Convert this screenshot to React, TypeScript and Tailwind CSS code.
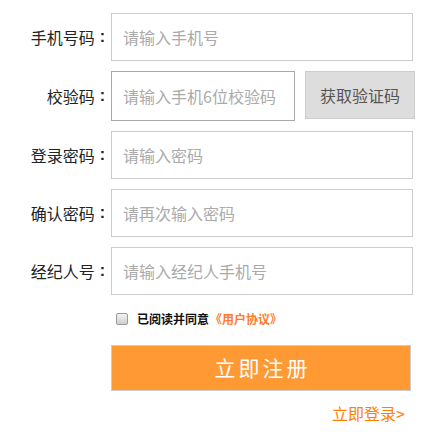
import React from "react";

const font = "font-['Microsoft_YaHei','Noto_Sans_CJK_SC',sans-serif]";

function Label({ text }: { text: string }) {
  return (
    <label className="w-[111px] flex justify-end items-center text-[16px] leading-[20px] text-[#222]">
      <span>{text}</span>
      <span className="ml-[5px] mr-[6px] font-['Liberation_Sans',sans-serif] font-bold">:</span>
    </label>
  );
}

function Row({ label, placeholder, last }: { label: string; placeholder: string; last?: boolean }) {
  return (
    <div className={`flex items-center h-[48px] ${last ? "" : "mb-[10px]"}`}>
      <Label text={label} />
      <input
        className="w-[302px] h-[48px] border border-[#ccc] px-[11px] text-[16px] text-[#333] placeholder:text-[#aaa] outline-none"
        placeholder={placeholder}
      />
    </div>
  );
}

export default function App() {
  return (
    <div className={`w-[447px] h-[434px] bg-white pt-[13px] ${font}`}>
      <Row label="手机号码" placeholder="请输入手机号" />
      <div className="flex items-center h-[50px] mb-[10px]">
        <Label text="校验码" />
        <input
          className="w-[184px] h-[50px] border border-[#a9a9a9] px-[11px] text-[16px] text-[#333] placeholder:text-[#aaa] outline-none"
          placeholder="请输入手机6位校验码"
        />
        <button className="ml-[10px] w-[110px] h-[48px] self-start bg-[#ddd] border border-[#ccc] text-[#555] text-[16px]">
          获取验证码
        </button>
      </div>
      <Row label="登录密码" placeholder="请输入密码" />
      <Row label="确认密码" placeholder="请再次输入密码" />
      <Row label="经纪人号" placeholder="请输入经纪人手机号" last />
      <div className="flex items-center mt-[18px] pl-[116px] h-[12px]">
        <div className="w-[12px] h-[12px] rounded-[2px] border border-[#9a9a9a] bg-gradient-to-b from-[#f4f4f4] to-[#cfcfcf]" />
        <span className="ml-[9px] text-[12px] leading-[14px] font-bold text-[#111]">已阅读并同意</span>
        <span className="ml-[1px] text-[12px] leading-[14px] font-bold text-[#ff7a2a]">《用户协议》</span>
      </div>
      <button className="mt-[20px] ml-[111px] w-[300px] h-[46px] bg-[#ff9933] border border-[#ccc] text-white text-[21px] tracking-[3px] pl-[3px] block">
        立即注册
      </button>
      <div className="mt-[13px] w-[405px] text-right text-[16px] leading-[18px] text-[#ff8000]">立即登录&gt;</div>
    </div>
  );
}
